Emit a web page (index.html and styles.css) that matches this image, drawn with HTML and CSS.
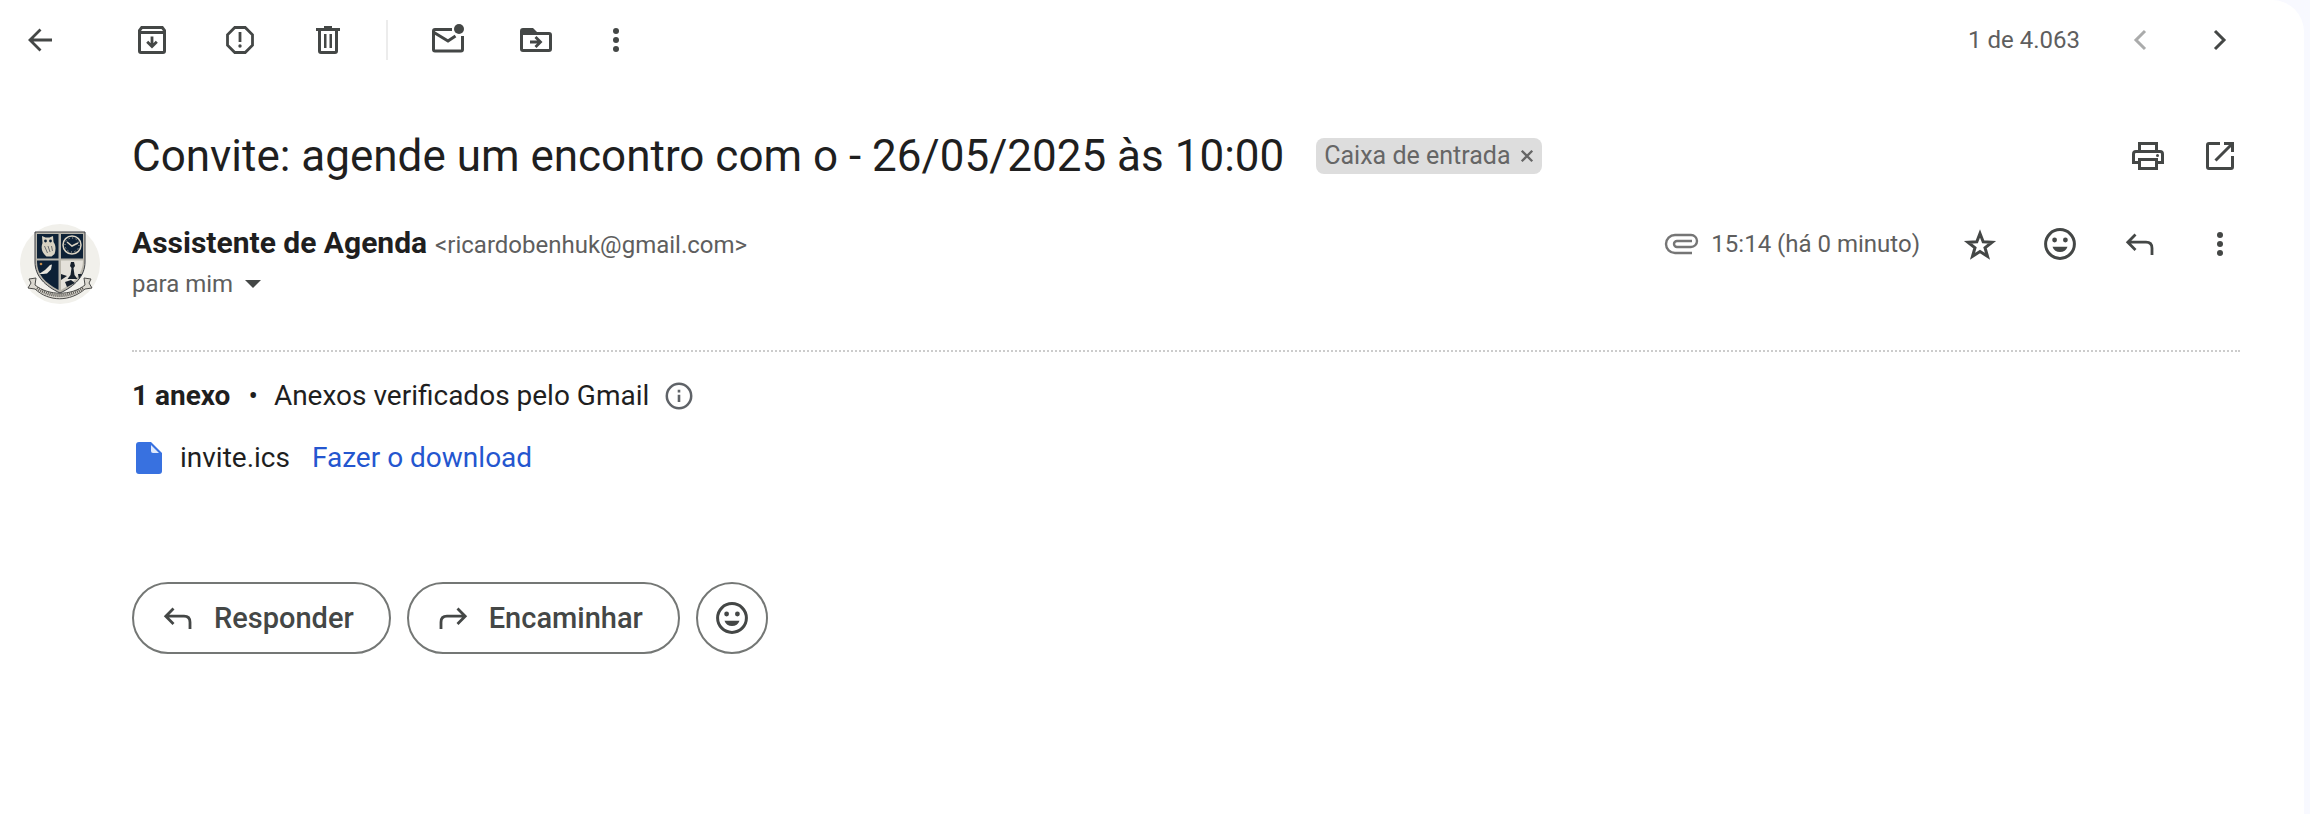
FILE: index.html
```html
<!DOCTYPE html>
<html lang="pt-BR">
<head>
<meta charset="utf-8">
<title>Convite: agende um encontro</title>
<link rel="stylesheet" href="styles.css">
</head>
<body>
<svg class="sprite" aria-hidden="true">
  <symbol id="i-emoji" viewBox="0 0 40 40"><circle cx="20" cy="20" r="14.4" fill="none" stroke="currentColor" stroke-width="3"/><circle cx="14.600" cy="16" r="2.400"/><circle cx="25.400" cy="16" r="2.400"/><path d="M12.500 22.800h15c-1 3.500-4 5.200-7.500 5.200s-6.500-1.700-7.500-5.200z"/></symbol>
  <symbol id="i-reply" viewBox="0 0 40 40"><path d="M15.500 10.500L7.800 18.200l7.700 7.700M8 18.200h18q6 0 6 6V31" fill="none" stroke="currentColor" stroke-width="2.800"/></symbol>
  <symbol id="i-more" viewBox="0 0 40 40"><circle cx="20" cy="11" r="3"/><circle cx="20" cy="20" r="3"/><circle cx="20" cy="29" r="3"/></symbol>
</svg>
<main class="panel">
  <header class="toolbar">
    <button class="icon-btn back" aria-label="Voltar"><svg viewBox="0 0 40 40"><path d="M20.500 9.500L10 20l10.500 10.500M10.500 20H32" fill="none" stroke="currentColor" stroke-width="2.800"/></svg></button>
    <button class="icon-btn" aria-label="Arquivar"><svg viewBox="0 0 40 40"><path fill-rule="evenodd" d="M9 6h22l3 4v21q0 3-3 3H9q-3 0-3-3V10zM10.500 9L9 11h22l-1.500-2zM9 14v17h22V14z"/><path d="M20 16.500v10M15.200 21.800l4.800 4.800 4.800-4.800" fill="none" stroke="currentColor" stroke-width="2.800"/></svg></button>
    <button class="icon-btn" aria-label="Denunciar spam"><svg viewBox="0 0 40 40"><path d="M14.800 7.500h10.400l7.300 7.300v10.400l-7.300 7.300H14.800l-7.300-7.300V14.800z" fill="none" stroke="currentColor" stroke-width="2.800"/><path d="M18.600 12h2.800v10h-2.800z"/><circle cx="20" cy="26" r="1.700"/></svg></button>
    <button class="icon-btn" aria-label="Excluir"><svg viewBox="0 0 40 40"><path fill-rule="evenodd" d="M8 8h8V6h8v2h8v3h-2v20q0 3-3 3H13q-3 0-3-3V11H8zM13 11v20h14V11zM16 14h2.500v14H16zM21.500 14H24v14h-2.500z"/></svg></button>
    <span class="divider"></span>
    <button class="icon-btn unread" aria-label="Marcar como não lida"><svg viewBox="0 0 40 40"><path d="M24 9.500H7q-1.500 0-1.500 1.500v18.500q0 1.500 1.500 1.500h26q1.500 0 1.500-1.500V16M6 12.500L20 21l7.500-5" fill="none" stroke="currentColor" stroke-width="3"/><circle cx="31" cy="9" r="5"/></svg></button>
    <button class="icon-btn" aria-label="Mover para"><svg viewBox="0 0 40 40"><path fill-rule="evenodd" d="M7 8h10l4 4h12q3 0 3 3v14q0 3-3 3H7q-3 0-3-3V11q0-3 3-3zM7 15v14h26V15z"/><path d="M14 22h10M19.500 17l5 5-5 5" fill="none" stroke="currentColor" stroke-width="2.800"/></svg></button>
    <button class="icon-btn more" aria-label="Mais"><svg><use href="#i-more"/></svg></button>
    <span class="count">1 de 4.063</span>
    <button class="icon-btn newer" aria-label="Mais recente" disabled><svg viewBox="0 0 40 40"><path d="M25 11l-9 9 9 9" fill="none" stroke="currentColor" stroke-width="3"/></svg></button>
    <button class="icon-btn" aria-label="Mais antiga"><svg viewBox="0 0 40 40"><path d="M15 11l9 9-9 9" fill="none" stroke="currentColor" stroke-width="3"/></svg></button>
  </header>

  <section class="subject">
    <h1>Convite: agende um encontro com o - 26/05/2025 às 10:00</h1>
    <span class="chip">Caixa de entrada <button class="chip-x" aria-label="Remover marcador"><svg viewBox="0 0 12 12"><path d="M1.500 1.500l9 9M10.500 1.500l-9 9" stroke="currentColor" stroke-width="2"/></svg></button></span>
    <span class="subject-actions">
      <button class="icon-btn" aria-label="Imprimir"><svg viewBox="0 0 40 40"><path fill-rule="evenodd" d="M10 6h20v8h2q4 0 4 4v10h-6v6H10v-6H4V18q0-4 4-4h2zM13 9v5h14V9zM7 25h3v-3h20v3h3v-7q0-1-1-1H8q-1 0-1 1zM13 25v6h14v-6z"/><circle cx="29.500" cy="19.500" r="1.500"/></svg></button>
      <button class="icon-btn" aria-label="Nova janela"><svg viewBox="0 0 40 40"><path d="M20 7.500H9q-1.500 0-1.500 1.500v22q0 1.500 1.500 1.500h22q1.500 0 1.500-1.500V20M24 7.500h8.500V16M32 8L15.500 24.500" fill="none" stroke="currentColor" stroke-width="3"/></svg></button>
    </span>
  </section>

  <section class="sender">
    <svg class="avatar" viewBox="0 0 80 80" role="img" aria-label="Assistente de Agenda">
      <circle cx="40" cy="40" r="40" fill="#f1f0eb"/>
      <path d="M15 8h50v30c0 14-10 24-25 31C25 62 15 52 15 38z" fill="#b9b6ac" stroke="#3a3d42"/>
      <path d="M17 10h21.500v24.500H17zM41 10h22v24.500H41zM17 36.500h21.500V66C25 59 17 50 17 38z" fill="#0d2136"/>
      <path d="M41 36.500h22c0 13-8 22-22 29.500z" fill="#e4e1da"/>
      <path d="M22 12l3.500 1.500h4L33 12l.5 6c2.500 3 2.500 8 1 12l-3 2.500h-5C22 29 20.500 24 22.500 19z" fill="#d8d2c2"/>
      <circle cx="25.500" cy="17" r="1.400" fill="#0d2136"/><circle cx="30.500" cy="17" r="1.400" fill="#0d2136"/>
      <path d="M24.500 22l3 7M28 22l2 6M31.500 22l1 5" stroke="#6b6f72" fill="none"/>
      <circle cx="52" cy="21" r="9" fill="none" stroke="#d8d2c2" stroke-width="1.500"/><circle cx="52" cy="21" r="7" fill="none" stroke="#d8d2c2" stroke-dasharray="1 2.660"/><path d="M47 18l5 4 6-3" fill="none" stroke="#d8d2c2" stroke-width="1.500"/>
      <path d="M19 50l6-4 5-5 2-.5-1 5-4 4-4 .5z" fill="#e8e5dc"/><circle cx="21" cy="40" r="1.300" fill="#c28b4a"/>
      <path d="M51 38h3l1 4-1.500 2 1 7 3 4H47.500l3-4 1-7-1.500-2z" fill="#16202c"/>
      <path d="M41 50l6 2-6 4zM58 50l4 0-3 5zM45 58l6-2 4 3-8 4z" fill="#16202c"/>
      <path d="M9 55l7-1-1 7c14 11 36 11 50 0l-1-7 7 1-2 4 3 5-7 1c-15 13-36 13-50 0l-7-1 3-5z" fill="#dad7cf" stroke="#4a4a48"/>
      <path d="M17 64c14 10 32 10 46 0" fill="none" stroke="#55534e" stroke-width="3" stroke-dasharray="1 1"/>
    </svg>
    <div class="who">
      <div class="from"><strong>Assistente de Agenda</strong><span class="email">&lt;ricardobenhuk@gmail.com&gt;</span></div>
      <button class="to">para mim <span class="caret"></span></button>
    </div>
    <div class="meta">
      <svg class="clip" viewBox="0 0 36 24"><path d="M29 21H12a9 9 0 0 1 0-18h16a6 6 0 0 1 0 12H14a3 3 0 0 1 0-6h15" fill="none" stroke="currentColor" stroke-width="2.400"/></svg>
      <span class="time">15:14 (há 0 minuto)</span>
      <span class="meta-actions">
        <button class="icon-btn" aria-label="Com estrela"><svg viewBox="0 0 40 40"><path d="M20 9.500l3.200 8.300 8.800.500-7 5.400 2.500 8.600L20 27.500l-7.500 4.800 2.500-8.600-7-5.400 8.800-.500z" fill="none" stroke="currentColor" stroke-width="3"/></svg></button>
        <button class="icon-btn" aria-label="Reagir"><svg><use href="#i-emoji"/></svg></button>
        <button class="icon-btn" aria-label="Responder"><svg><use href="#i-reply"/></svg></button>
        <button class="icon-btn" aria-label="Mais opções"><svg><use href="#i-more"/></svg></button>
      </span>
    </div>
  </section>

  <section class="attachments">
    <p class="summary"><strong>1 anexo</strong><span class="dot">•</span><span>Anexos verificados pelo Gmail</span>
      <svg class="info" viewBox="0 0 32 32"><circle cx="16" cy="16" r="12.200" fill="none" stroke="currentColor" stroke-width="2.500"/><path d="M14.700 14.700h2.600V22h-2.600zM14.700 9.800h2.600v2.600h-2.600z"/></svg></p>
    <p class="file">
      <svg class="doc" viewBox="0 0 26 32"><path d="M3 0h12l11 11v18q0 3-3 3H3q-3 0-3-3V3q0-3 3-3z" fill="#3871e0"/><path d="M15 3l8 8h-6q-2 0-2-2z" fill="#dfe9fc"/></svg>
      <span>invite.ics</span><a href="#">Fazer o download</a></p>
  </section>

  <footer class="replies">
    <button class="pill"><svg><use href="#i-reply"/></svg>Responder</button>
    <button class="pill"><svg class="flip"><use href="#i-reply"/></svg>Encaminhar</button>
    <button class="pill round" aria-label="Reagir com emoji"><svg><use href="#i-emoji"/></svg></button>
  </footer>
</main>
</body>
</html>
```
FILE: styles.css
```css
* { box-sizing: border-box; }
body {
  margin: 0;
  min-height: 100vh;
  display: flex;
  padding-right: 6px;
  background: #f8f9ff;
  color: #1f1f1f;
  font-family: Roboto, "Liberation Sans", sans-serif;
  font-size: 28px;
  line-height: 36px;
}
.sprite { position: absolute; width: 0; height: 0; }
button { margin: 0; padding: 0; border: 0; background: none; color: inherit; font: inherit; cursor: pointer; }
svg { display: block; fill: currentColor; }
h1, p { margin: 0; }
.panel { flex: 1; padding: 20px 64px 48px 20px; background: #fff; border-radius: 0 32px 0 0; }
.icon-btn { width: 40px; height: 40px; flex: none; color: #444746; }
.icon-btn svg { width: 40px; height: 40px; }

.toolbar { display: flex; align-items: center; gap: 48px; color: #5e5e5e; font-size: 24px; }
.back { margin-right: 24px; }
.divider { width: 2px; height: 40px; margin: 0 -10px; background: #ececec; }
.unread { margin-left: 2px; }
.more { margin-left: -8px; }
.count { margin-left: auto; margin-right: -8px; }
.toolbar .icon-btn:last-child { margin-left: -8px; }
.newer { opacity: .45; }

.subject { display: flex; align-items: center; margin-top: 68px; padding-left: 112px; }
h1 { font-size: 44px; line-height: 56px; font-weight: 400; }
.chip { display: flex; align-items: center; gap: 10px; height: 36px; margin-left: 32px; padding: 0 8px; border-radius: 8px; background: #ddd; color: #666; font-size: 25px; }
.chip-x svg { width: 14px; height: 14px; }
.subject-actions { display: flex; gap: 32px; margin-left: auto; }

.sender { display: flex; align-items: flex-start; margin-top: 40px; }
.avatar { width: 80px; height: 80px; }
.who { margin-left: 32px; }
.from { display: flex; align-items: baseline; gap: 8px; line-height: 38px; }
.from strong { font-size: 30px; }
.email, .to, .time { color: #5e5e5e; font-size: 24px; }
.to { display: flex; align-items: center; gap: 12px; line-height: 40px; }
.caret { border: 8px solid transparent; border-top-color: #444746; border-bottom: 0; }
.meta { display: flex; align-items: center; margin-left: auto; line-height: 40px; }
.clip { width: 36px; height: 24px; margin-right: 12px; color: #757575; }
.meta-actions { display: flex; gap: 40px; margin-left: 40px; }

.attachments { margin: 46px 0 0 112px; padding-top: 26px; border-top: 2px dotted #ccc; }
.summary, .file { display: flex; align-items: center; }
.dot { margin: 0 16px 0 18px; }
.info { width: 32px; height: 32px; margin-left: 14px; color: #5f6368; }
.file { margin-top: 26px; }
.doc { width: 26px; height: 32px; margin: 0 18px 0 4px; }
.file a { margin-left: 22px; color: #2456cf; text-decoration: none; }

.replies { display: flex; gap: 16px; margin: 106px 0 0 112px; }
.pill { display: flex; align-items: center; gap: 16px; height: 72px; padding: 0 35px 0 24px; border: 2px solid #747775; border-radius: 36px; color: #444746; font-size: 29px; font-weight: 500; }
.pill svg { width: 40px; height: 40px; }
.flip { transform: scaleX(-1); }
.round { width: 72px; padding: 0 14px; }
```
